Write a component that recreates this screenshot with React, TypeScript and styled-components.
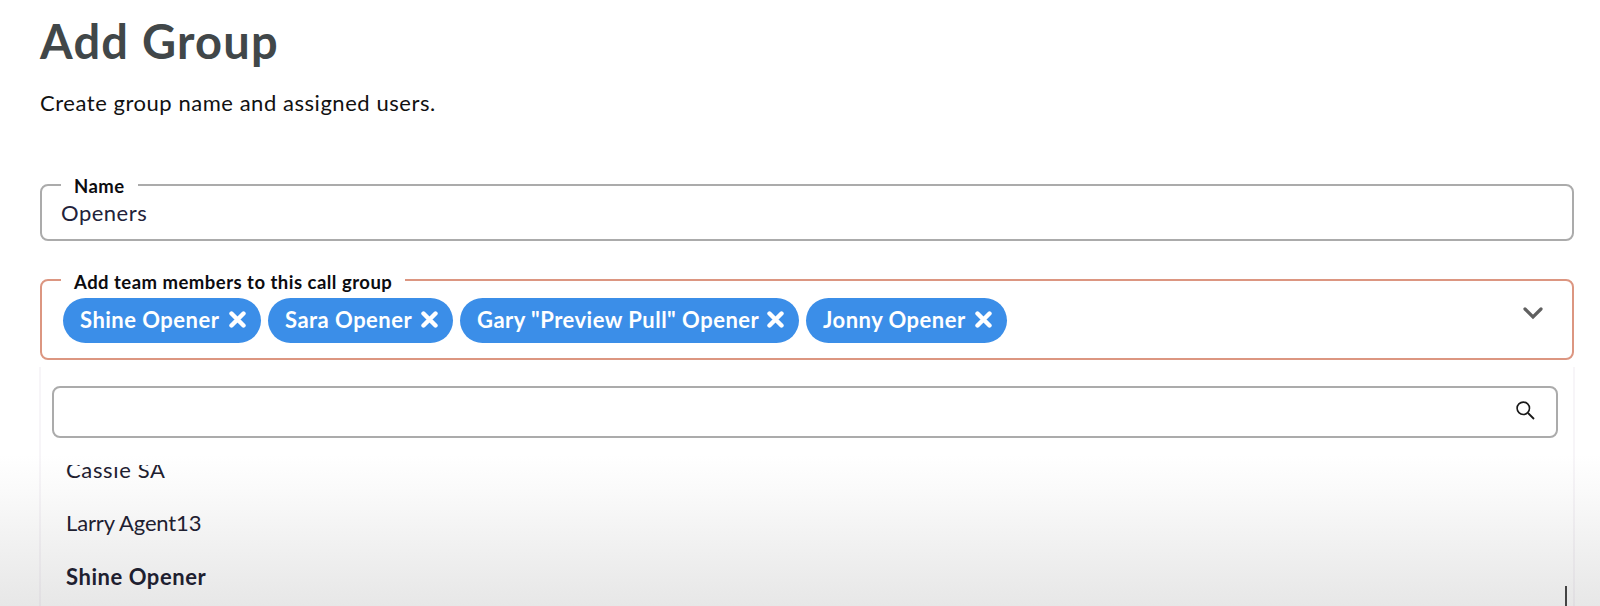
import { FC, PropsWithChildren } from "react";
import styled, { createGlobalStyle } from "styled-components";

const GlobalStyle = createGlobalStyle`
  * {
    box-sizing: border-box;
  }

  body {
    margin: 0;
    overflow: hidden;
    color: #111;
    font-family: Lato, "Open Sans", sans-serif;
    font-size: 22px;
  }
`;

const Page = styled.main`
  display: flex;
  flex-direction: column;
  height: 606px;
  padding: 11px 26px 0 40px;
  overflow: hidden;
  background: linear-gradient(#fff 455px, #fafafa 490px, #f0f0f0 550px, #e7e7e7 606px);
`;

const Title = styled.h1`
  flex: none;
  height: 60px;
  margin: 0;
  color: #414749;
  font-size: 47px;
  font-weight: 700;
  line-height: 60px;
  letter-spacing: 1.25px;
`;

const Description = styled.p`
  flex: none;
  margin: 18px 0 0;
  color: #111;
  line-height: 28px;
  letter-spacing: 0.54px;
`;

type FieldFrameProps = { $height: number; $gap: number; $color: string };

const FieldFrame = styled.fieldset<FieldFrameProps>`
  flex: none;
  width: 1534px;
  height: ${(props) => props.$height}px;
  margin: ${(props) => props.$gap}px 0 0;
  padding: 0 29px 0 19px;
  border: 2px solid ${(props) => props.$color};
  border-radius: 8px;
`;

const Legend = styled.legend<{ $offset: number }>`
  height: 24px;
  padding: ${(props) => props.$offset}px 13px 0;
  color: #0c0c10;
  font-size: 18.5px;
  font-weight: 700;
  line-height: 22px;
  letter-spacing: 0.48px;
  white-space: nowrap;
`;

const NameValue = styled.div`
  margin-top: 2px;
  color: #22223a;
  line-height: 28px;
  letter-spacing: 0.5px;
`;

const Selection = styled.div`
  display: flex;
  align-items: flex-start;
  padding: 6px 0 0 2px;
`;

const ChipList = styled.div`
  display: flex;
  flex: 1;
  gap: 7px;
`;

const ChipBody = styled.span<{ $width: number }>`
  display: flex;
  align-items: center;
  justify-content: space-between;
  width: ${(props) => props.$width}px;
  height: 45px;
  padding: 0 15px 3px 17px;
  border-radius: 23px;
  background: #3b8ee8;
  color: #fff;
  font-weight: 700;
  letter-spacing: 0.48px;
  white-space: nowrap;
`;

const Chip: FC<PropsWithChildren<{ width: number }>> = (props) => (
  <ChipBody $width={props.width}>
    {props.children}
    <svg width="17" height="17" viewBox="0 0 17 17" fill="none" stroke="#fff" strokeWidth="4.4">
      <path d="M2.5 2.5L14.5 14.5M14.5 2.5L2.5 14.5" strokeLinecap="round" />
    </svg>
  </ChipBody>
);

const Chevron = styled.svg`
  margin: 9px 0 0;
`;

const Dropdown = styled.section`
  display: flex;
  flex: 1;
  flex-direction: column;
  width: 1536px;
  min-height: 0;
  margin: 7px 0 0 -1px;
  padding: 19px 6px 0 13px;
  border: solid rgba(120, 90, 140, 0.06);
  border-width: 0 2px;
`;

const SearchBox = styled.div`
  display: flex;
  flex: none;
  align-items: center;
  justify-content: flex-end;
  width: 1506px;
  height: 52px;
  margin-left: -2px;
  padding: 0 21px 3px 0;
  border: 2px solid #ababab;
  border-radius: 8px;
  background: #fff;
`;

const ListArea = styled.div`
  display: flex;
  flex: 1;
  justify-content: space-between;
  min-height: 0;
  margin-top: 27px;
  overflow: hidden;
`;

const Options = styled.ul`
  margin: -22px 0 0;
  padding: 0 0 0 12px;
  list-style: none;
`;

const Option = styled.li<{ $selected?: boolean; $spacing: number }>`
  height: 53.4px;
  color: #1e2030;
  font-weight: ${(props) => (props.$selected ? 700 : 400)};
  line-height: 53.4px;
  letter-spacing: ${(props) => props.$spacing}px;
`;

const ScrollThumb = styled.div`
  width: 2px;
  height: 60px;
  margin-top: 121px;
  background: #444;
`;

const members = [
  { name: "Shine Opener", width: 198 },
  { name: "Sara Opener", width: 185 },
  { name: 'Gary "Preview Pull" Opener', width: 339 },
  { name: "Jonny Opener", width: 201 },
];

const App: FC = () => (
  <>
    <GlobalStyle />
    <Page>
      <Title>Add Group</Title>
      <Description>Create group name and assigned users.</Description>
      <FieldFrame $height={68} $gap={56} $color="#ababab">
        <Legend $offset={2}>Name</Legend>
        <NameValue>Openers</NameValue>
      </FieldFrame>
      <FieldFrame $height={92} $gap={27} $color="#dc9681">
        <Legend $offset={3}>Add team members to this call group</Legend>
        <Selection>
          <ChipList>
            {members.map((member) => (
              <Chip key={member.name} width={member.width}>
                {member.name}
              </Chip>
            ))}
          </ChipList>
          <Chevron width="20" height="13" viewBox="0 0 20 13" fill="none" stroke="#606060" strokeWidth="3.2">
            <path d="M2 2L10 10L18 2" strokeLinecap="round" />
          </Chevron>
        </Selection>
      </FieldFrame>
      <Dropdown>
        <SearchBox>
          <svg width="19" height="19" viewBox="0 0 19 19" fill="none" stroke="#181818" strokeWidth="1.6">
            <circle cx="7.3" cy="7.3" r="6.2" />
            <path d="M12 12L18 18" strokeWidth="1.8" />
          </svg>
        </SearchBox>
        <ListArea>
          <Options>
            <Option $spacing={0.65}>Cassie SA</Option>
            <Option $spacing={-0.15}>Larry Agent13</Option>
            <Option $selected $spacing={0.55}>
              Shine Opener
            </Option>
          </Options>
          <ScrollThumb />
        </ListArea>
      </Dropdown>
    </Page>
  </>
);

export default App;
